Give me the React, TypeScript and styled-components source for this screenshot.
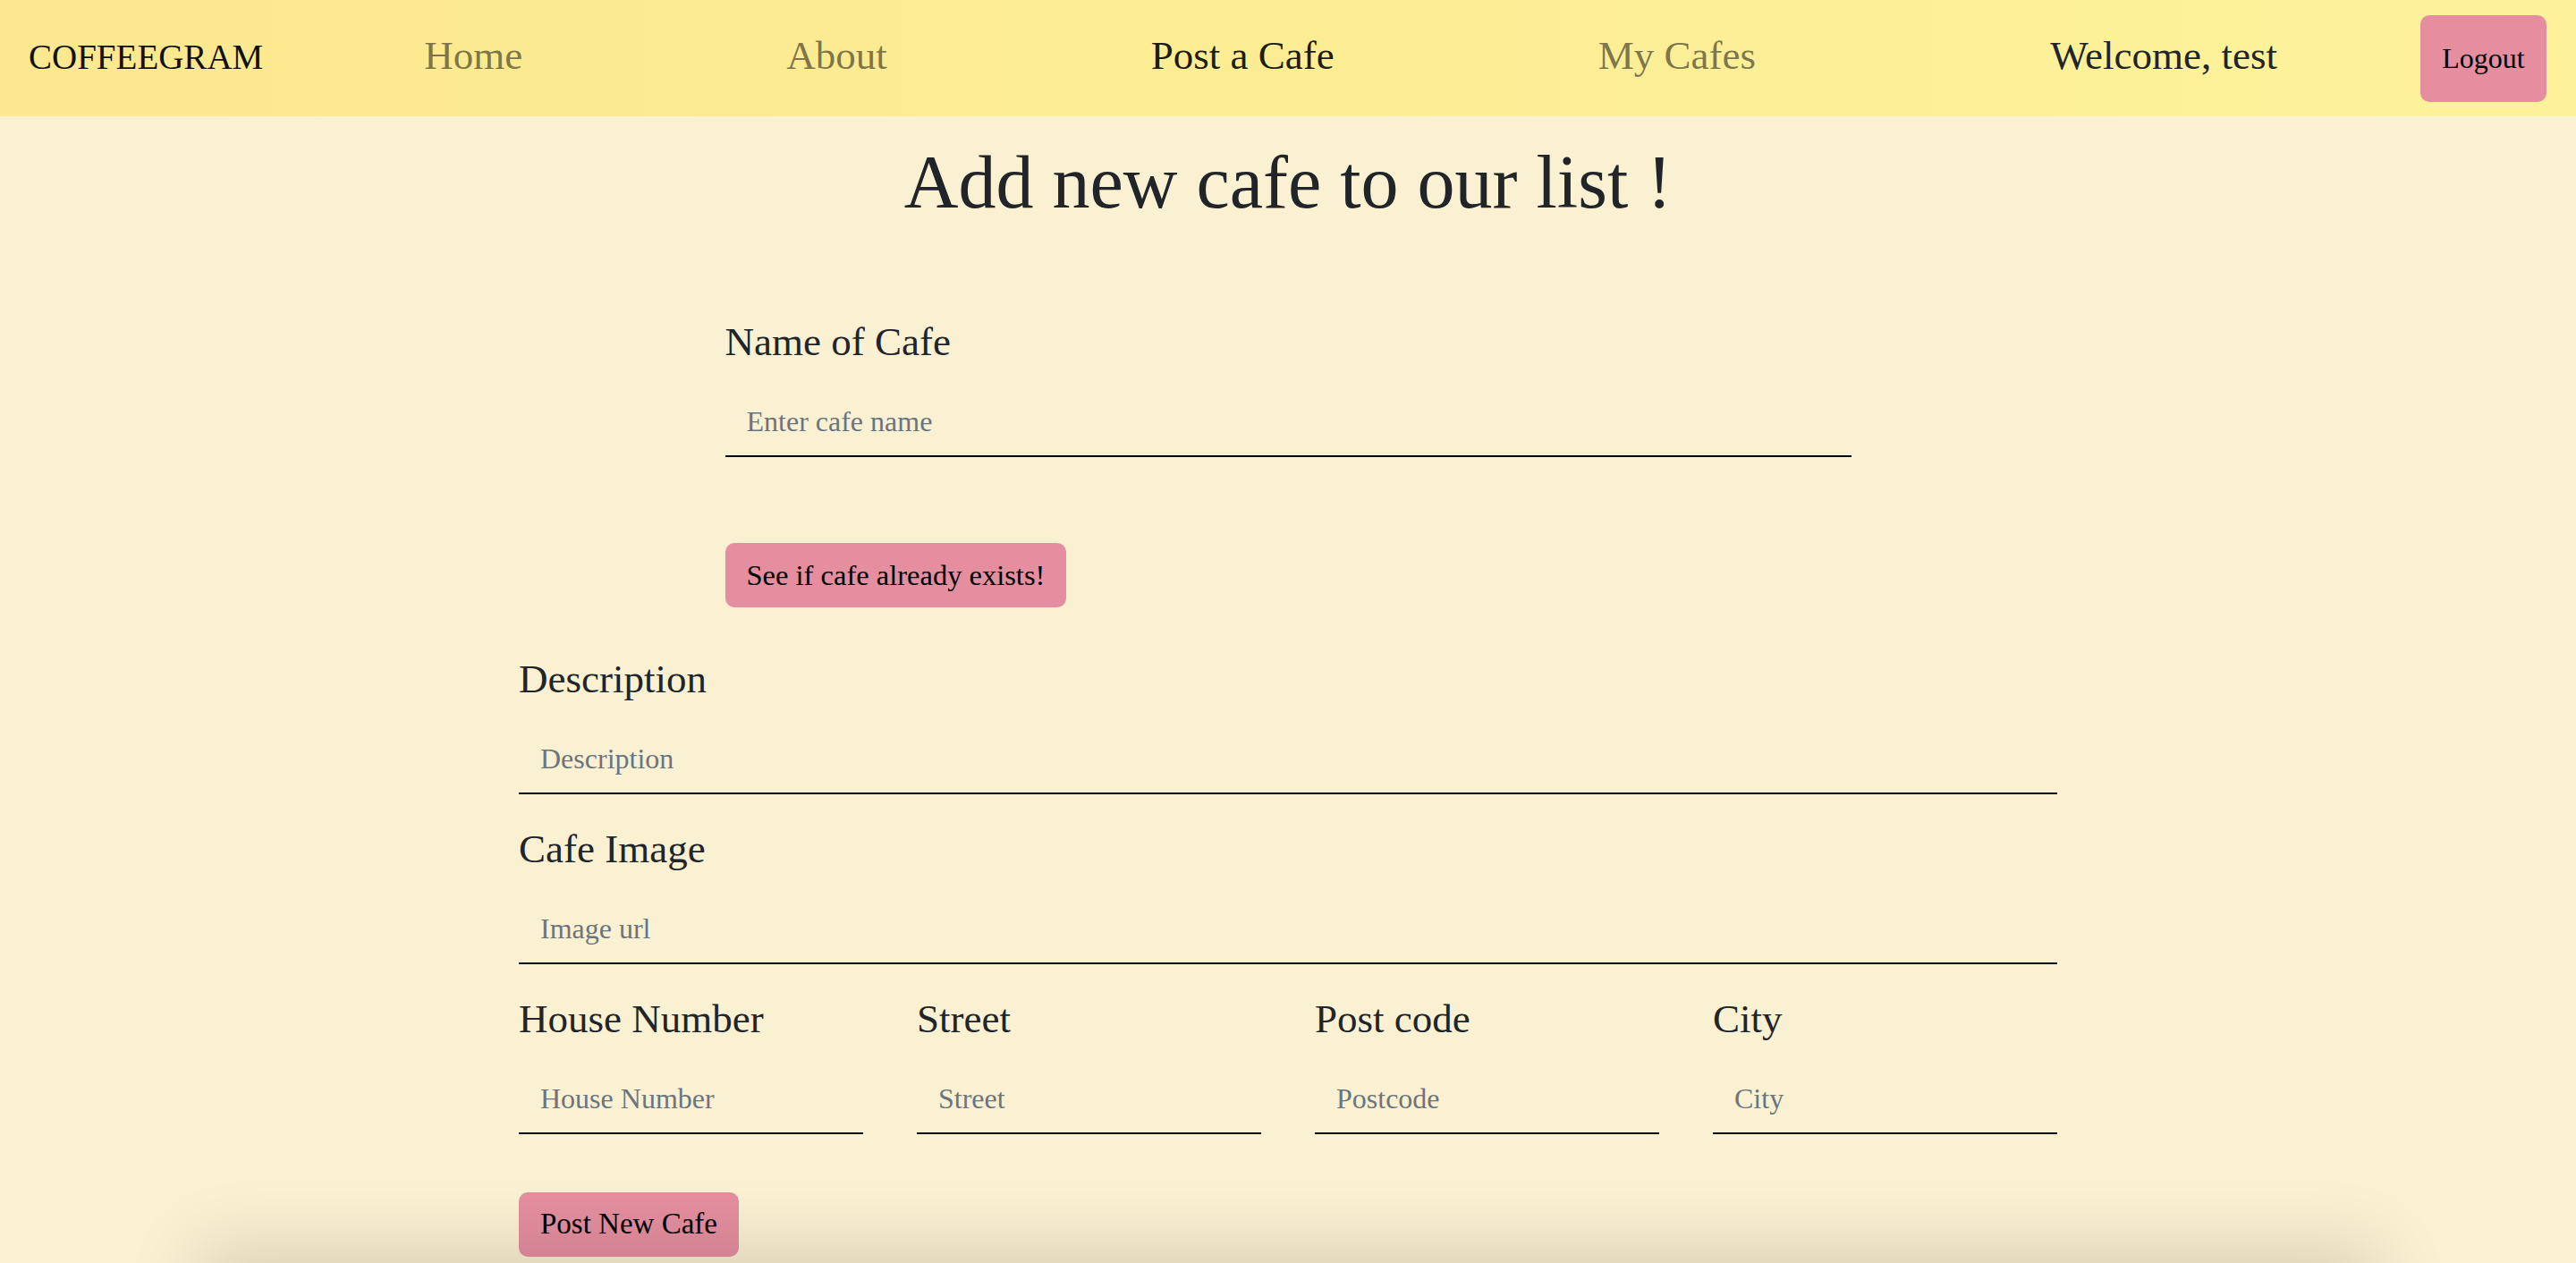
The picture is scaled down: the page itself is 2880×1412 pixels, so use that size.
import React from "react";
import styled, { createGlobalStyle } from "styled-components";

const GlobalStyle = createGlobalStyle`
  html, body {
    margin: 0;
    padding: 0;
  }
  body {
    background: #faf0d2;
    font-family: "Liberation Serif", "Times New Roman", serif;
    color: #212529;
    overflow: hidden;
  }
  *, *::before, *::after {
    box-sizing: border-box;
  }
`;

const Page = styled.div`
  height: 100vh;
  overflow: hidden;
  display: flex;
  flex-direction: column;
`;

const NavBar = styled.nav`
  flex: none;
  height: 130px;
  display: flex;
  align-items: center;
  padding: 0 33px 0 32px;
  background: linear-gradient(90deg, #fce88e 0%, #fdf29c 100%);
`;

const Brand = styled.a`
  font-size: 39px;
  line-height: 1.15;
  color: #111;
  text-decoration: none;
  padding-bottom: 2px;
  margin-right: 180px;
`;

const NavLinks = styled.div`
  display: flex;
  align-items: center;
  gap: 295px;
`;

const NavLink = styled.a<{ $active?: boolean }>`
  font-size: 45px;
  line-height: 1.15;
  padding-bottom: 5px;
  text-decoration: none;
  color: ${(p) => (p.$active ? "rgba(0, 0, 0, 0.9)" : "rgba(0, 0, 0, 0.52)")};
`;

const Welcome = styled.span`
  margin-left: auto;
  margin-right: 160px;
  font-size: 45px;
  line-height: 1.15;
  padding-bottom: 5px;
  color: #212529;
`;

const PinkButton = styled.button<{ $font?: number }>`
  display: inline-flex;
  align-items: center;
  justify-content: center;
  height: 72px;
  padding: 0 24px;
  border: none;
  border-radius: 10px;
  background: #e48e9f;
  color: #000;
  font-family: inherit;
  font-size: ${(p) => p.$font ?? 32}px;
  line-height: 1;
  cursor: pointer;
`;

const LogoutButton = styled(PinkButton)`
  width: 141px;
  height: 97px;
  padding: 0;
`;

const Main = styled.main`
  flex: none;
  display: flex;
  flex-direction: column;
`;

const Title = styled.h1`
  margin: 24px 0 0;
  font-size: 84px;
  font-weight: 400;
  line-height: 1.2;
  text-align: center;
  color: #212529;
`;

const Form = styled.form`
  width: 1720px;
  margin: 0 auto;
  display: flex;
  flex-direction: column;
`;

const NameBlock = styled.div`
  width: 1259px;
  margin: 100px auto 0;
  display: flex;
  flex-direction: column;
  align-items: flex-start;
`;

const Field = styled.div<{ $gap?: number }>`
  width: 100%;
  display: flex;
  flex-direction: column;
  margin-top: ${(p) => p.$gap ?? 0}px;
`;

const Label = styled.label`
  display: block;
  font-size: 45px;
  line-height: 54px;
  margin-bottom: 26px;
  color: #212529;
`;

const Input = styled.input`
  width: 100%;
  height: 76px;
  padding: 0 24px;
  border: none;
  border-bottom: 2px solid #000;
  background: transparent;
  font-family: inherit;
  font-size: 32px;
  color: #212529;
  outline: none;
  &::placeholder {
    color: #6c757d;
  }
`;

const CheckButton = styled(PinkButton)`
  margin-top: 96px;
`;

const AddressRow = styled.div`
  margin-top: 34px;
  display: grid;
  grid-template-columns: repeat(4, 1fr);
  column-gap: 60px;
`;

const SubmitRow = styled.div`
  margin-top: 65px;
  display: flex;
`;

const Footer = styled.footer`
  flex: none;
  position: relative;
  z-index: 1;
  width: 2400px;
  height: 120px;
  margin: 8px auto 0;
  background: #faf0d2;
  box-shadow: 0 0 80px 20px rgba(0, 0, 0, 0.13);
`;

const addressFields = [
  { label: "House Number", placeholder: "House Number" },
  { label: "Street", placeholder: "Street" },
  { label: "Post code", placeholder: "Postcode" },
  { label: "City", placeholder: "City" },
];

export default function App() {
  return (
    <>
      <GlobalStyle />
      <Page>
        <NavBar>
          <Brand href="#">COFFEEGRAM</Brand>
          <NavLinks>
            <NavLink href="#">Home</NavLink>
            <NavLink href="#">About</NavLink>
            <NavLink href="#" $active>
              Post a Cafe
            </NavLink>
            <NavLink href="#">My Cafes</NavLink>
          </NavLinks>
          <Welcome>Welcome, test</Welcome>
          <LogoutButton type="button" $font={32}>
            Logout
          </LogoutButton>
        </NavBar>
        <Main>
          <Title>Add new cafe to our list !</Title>
          <Form onSubmit={(e) => e.preventDefault()}>
            <NameBlock>
              <Field>
                <Label>Name of Cafe</Label>
                <Input placeholder="Enter cafe name" />
              </Field>
              <CheckButton type="button" $font={32.5}>
                See if cafe already exists!
              </CheckButton>
            </NameBlock>
            <Field $gap={53}>
              <Label>Description</Label>
              <Input placeholder="Description" />
            </Field>
            <Field $gap={34}>
              <Label>Cafe Image</Label>
              <Input placeholder="Image url" />
            </Field>
            <AddressRow>
              {addressFields.map((f) => (
                <Field key={f.label}>
                  <Label>{f.label}</Label>
                  <Input placeholder={f.placeholder} />
                </Field>
              ))}
            </AddressRow>
            <SubmitRow>
              <PinkButton type="submit" $font={33}>
                Post New Cafe
              </PinkButton>
            </SubmitRow>
          </Form>
        </Main>
        <Footer />
      </Page>
    </>
  );
}
